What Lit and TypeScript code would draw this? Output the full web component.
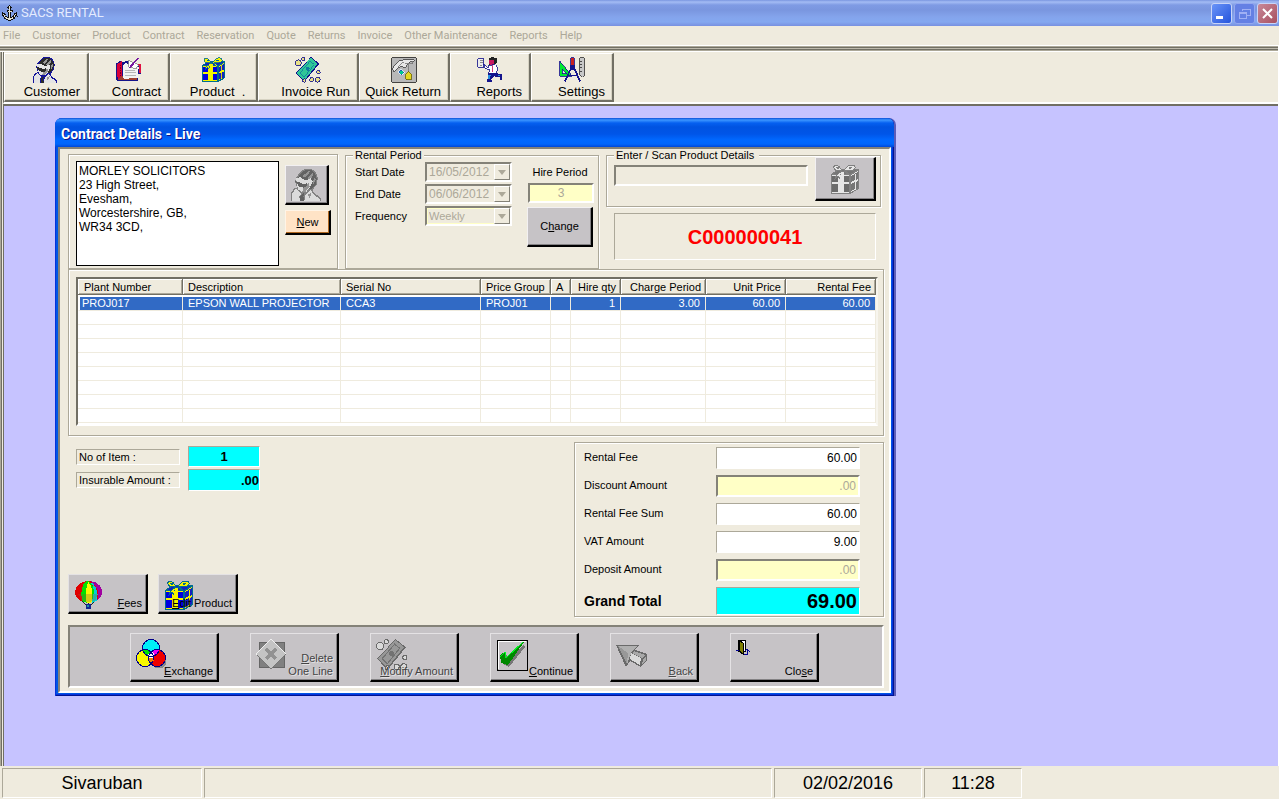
import { LitElement, html, css, svg, TemplateResult } from "lit";
import { customElement, property } from "lit/decorators.js";

const gift = (blue: string, yellow: string, line: string, shade: string) => svg`
  <path d="M1 10L9 5H29V25L20 30H1Z" fill=${line}/>
  <path d="M2 11H19V29H2Z" fill=${yellow}/>
  <path d="M21 11L28 7V24L21 28Z" fill=${yellow}/>
  <path d="M2 12H8V18H2ZM13 12H19V18H13ZM2 20H8V28H2ZM13 20H19V28H13Z" fill=${blue}/>
  <path d="M21 12L28 8V15L21 18ZM21 20L28 17V24L21 27Z" fill=${shade}/>
  <path d="M25 10V26" stroke=${yellow}/>
  <path d="M3 10L9 6H27L20 10Z" fill=${shade}/>
  <path d="M12 7C9 0 3 0 4 4C4 7 8 7 12 7C9 9 6 10 5 15L8 12L10 15C10 11 11 9 14 7C16 9 18 10 20 12C19 9 18 8 15 7C20 7 26 7 25 3C24 0 17 0 14 7Z" fill=${yellow} stroke=${line} stroke-width="1"/>
  <path d="M11 8H14V29H10V14Z" fill=${yellow}/>
  <path d="M6 3H9V5H7ZM18 4L20 3H22V4L19 5Z" fill=${line}/>`;

const person = (dark: string, mid: string, light: string, line: string) => svg`
  <path d="M4 12L5 8L9 3L13 0H20L24 3L26 9L25 15L21 20L22 23L29 28V31H0V23L3 19L6 18Z" fill=${line}/>
  <path d="M6 9L10 4L14 1H20L23 4L25 9L24 15L20 19L17 19L20 11L14 12L10 10L7 12Z" fill=${dark}/>
  <path d="M11 7L17 2L19 2L14 8ZM16 9L21 4L22 5L19 10ZM21 12L23 8L24 10L22 15Z" fill=${mid}/>
  <path d="M5 9L9 8L14 11L19 9L21 12L18 18L15 22H10L7 20L6 16Z" fill=${light}/>
  <path d="M12 17L17 14L18 17L14 22L11 22Z" fill=${mid}/>
  <path d="M4 12L9 13L13 15L16 13L15 17L12 18L8 17Z" fill=${dark}/>
  <path d="M1 31V24L3 21L5 19L7 21L10 24L8 27L9 31Z" fill=${light}/>
  <path d="M13 31L14 25L19 20L22 25L28 29V31Z" fill=${light}/>
  <path d="M9 26L13 23L12 27L13 31H9Z" fill=${dark}/>
  <path d="M16 25L20 23L18 28Z" fill=${mid}/>`;

const cash = (bg: string, mid: string, line: string, coin: string) => svg`
  <path d="M19 0L29 8L11 30L1 19Z" fill=${line}/>
  <path d="M19 1L27 8L11 28L2 19Z" fill=${bg}/>
  <path d="M18 5L23 9L11 24L6 19Z" fill="none" stroke=${mid}/>
  <circle cx="15" cy="14" r="2.500" fill=${mid}/>
  <g fill=${coin} stroke=${line}>
    <circle cx="4" cy="7" r="3.500"/><circle cx="10" cy="2.500" r="2"/>
    <circle cx="28" cy="18" r="2"/><circle cx="11" cy="28" r="2"/>
    <circle cx="20" cy="27" r="2.500"/><circle cx="27" cy="27" r="3"/>
  </g>`;

const ICONS: Record<string, TemplateResult> = {
  anchor: svg`
    <path d="M15 2L18 5L16 8V11H20V13H17V25L23 23L26 18L24 19L29 15L30 22L28 21L24 27L15 31L6 27L2 21L0 22L1 15L6 19H4L7 23L13 25V13H10V11H14V8L12 5Z" fill="#111" stroke="#111" stroke-width="2"/>
    <path d="M15 4L16 6L15 8L14 6ZM15 9V29M11 12H19M3 19L7 25L15 29L23 25L27 19" fill="none" stroke="#e8e4d4" stroke-width="2"/>`,
  person: person("#2a2a2a", "#969696", "#e4e4e4", "#14149a"),
  personOff: person("#626262", "#949494", "#dcdcdc", "#828282"),
  gift: gift("#0000e0", "#f4f400", "#006c90", "#1420c0"),
  giftOff: gift("#6c6c6c", "#e6e6e6", "#808080", "#767676"),
  cash: cash("#30c898", "#1078a0", "#10108c", "#e8e088"),
  cashOff: cash("#989898", "#727272", "#6a6a6a", "#dadada"),
  contract: svg`
    <path d="M0 8L6 4L8 6L16 4L18 10L28 8L30 20L26 20V29H2L0 26Z" fill="#14148c"/>
    <path d="M1 9L7 5V24L2 28Z" fill="#d80038"/>
    <path d="M2 27L8 22H25V28H3Z" fill="#a04030"/>
    <path d="M8 11L12 7L18 11L27 12L26 25L9 26Z" fill="#f2f2f2"/>
    <path d="M11 16H23M11 19H24M11 22H24" stroke="#aaa"/>
    <path d="M15 4L22 7L27 9L24 14L15 12Z" fill="#fff" stroke="#888"/>
    <path d="M16 13L24 4L27 1" stroke="#7818a0" stroke-width="2"/>
    <path d="M26 9H29V18H27" fill="none" stroke="#e01040" stroke-width="2"/>
    <path d="M5 9V24" stroke="#600018" stroke-dasharray="2 1"/>`,
  hand: svg`
    <path d="M1 1H30V30H1Z" fill="#b8b8b8" stroke="#222" stroke-width="1"/>
    <path d="M2 13L9 5L16 3L28 3V5L22 6L17 13L12 11L7 14L3 18Z" fill="#e8e8e8" stroke="#444" stroke-width="1"/>
    <path d="M8 12L15 6M17 8H26V5" fill="none" stroke="#777"/>
    <path d="M8 18L12 14L16 18L12 22Z" fill="#1860b0" stroke="#fff"/>
    <path d="M11 17H14V20H11Z" fill="#00c890"/>
    <path d="M21 7V18" stroke="#777"/>
    <path d="M18 20L21 17L25 21L24 27H18L17 24Z" fill="#e4d820" stroke="#6c6410" stroke-width="1"/>`,
  runner: svg`
    <path d="M1 2H8V12H1Z" fill="#ececec" stroke="#14148c" stroke-width="1"/>
    <path d="M3 4H7M3 7H7M3 10H6" stroke="#777"/>
    <path d="M14 2L18 0L24 2V7L20 9H14Z" fill="#222"/>
    <path d="M14 4H20V9H15Z" fill="#c81860"/>
    <path d="M8 8L13 13L14 10L22 9L25 14L22 20H14L15 15L10 14Z" fill="#fff" stroke="#14148c" stroke-width="1"/>
    <path d="M18 10V18" stroke="#c81860" stroke-width="1"/>
    <path d="M13 19H22L30 21V27H27V24L20 23L17 27L18 30H12V27L14 24Z" fill="#14148c"/>
    <path d="M13 21H17L14 28ZM23 21H27V23Z" fill="#2890e0"/>`,
  tools: svg`
    <path d="M1 5L16 23H1Z" fill="#00e830" stroke="#14148c" stroke-width="1"/>
    <path d="M4 14L9 20H4Z" fill="#efebde" stroke="#14148c" stroke-width="1"/>
    <path d="M16 10L7 29M17 10L25 29M11 22H23" stroke="#14148c" stroke-width="2"/>
    <path d="M14 1H18V10H14Z" fill="#c82020" stroke="#14148c" stroke-width="1"/>
    <path d="M13 10H19V15H13Z" fill="#14148c"/>
    <path d="M25 1H30V22L28 24L25 22Z" fill="#c8c8c8" stroke="#333" stroke-width="1"/>
    <path d="M25 5H28M25 9H27M25 13H28M25 17H27" stroke="#333"/>`,
  balloon: svg`
    <path d="M5 18L13 26M25 18L17 26M15 20V26" stroke="#222"/>
    <path d="M15 1C6 1 1 7 1 13C1 17 4 20 8 22L15 24L22 22C26 20 29 17 29 13C29 7 24 1 15 1Z" fill="#e00000"/>
    <path d="M13 1C8 5 7 9 8 22L15 24L20 22C23 12 20 4 15 1Z" fill="#00e000"/>
    <path d="M15 2C12 7 12 14 13 24H18C20 13 19 7 15 2Z" fill="#f8f800"/>
    <path d="M16 1C21 5 22 14 18 24L24 21C26 12 22 4 16 1Z" fill="#00d4d4"/>
    <path d="M17 1C26 2 29 8 29 13C29 17 27 19 24 21C27 12 24 6 17 1Z" fill="#a000a0"/>
    <path d="M4 14H25L22 21L15 23L8 21Z" fill="#806040" fill-opacity=".3"/>
    <path d="M12 25H18V30H13Z" fill="#102890"/><path d="M13 26H16V28H13Z" fill="#2090a0"/>`,
  circles: svg`
    <circle cx="23" cy="21" r="8.500" fill="#888"/>
    <circle cx="15" cy="9" r="8.500" fill="#00f0f8"/>
    <circle cx="9" cy="19" r="8.500" fill="#f8f800"/>
    <circle cx="21" cy="19" r="8.500" fill="#f00000"/>
    <path d="M7 11C11 10 15 12 17 14L14 17C11 17 8 15 7 11Z" fill="#00e000"/>
    <path d="M23 11C19 10 15 12 13 14L16 17C19 17 22 15 23 11Z" fill="#f000f0"/>
    <path d="M12 19H18C18 22 17 24 15 26C13 24 12 22 12 19Z" fill="#f08000"/>
    <path d="M12 15L15 12L18 15V19H12Z" fill="#fff"/>
    <g fill="none" stroke="#000088"><circle cx="15" cy="9" r="8.500"/><circle cx="9" cy="19" r="8.500"/><circle cx="21" cy="19" r="8.500"/></g>`,
  remove: svg`
    <path d="M3 3H28V28H3Z" fill="#808080" stroke="#666" stroke-width="1"/>
    <path d="M15 0L30 15L15 30L0 15Z" fill="#c4c4c4" stroke="#efefef" stroke-width="1"/>
    <path d="M30 15L15 30L1 16" fill="none" stroke="#777"/>
    <path d="M10 10L20 20M20 10L10 20" stroke="#929292" stroke-width="4"/>`,
  tick: svg`
    <path d="M1 1H31V31H1Z" fill="#c6c3c6" stroke="#000" stroke-width="1"/>
    <path d="M2 30V2H30" fill="none" stroke="#fff"/>
    <path d="M7 17L10 15L13 21L28 5L29 8L13 28L7 25Z" fill="#777"/>
    <path d="M4 16L9 13L11 19L26 3H28L12 26L5 24Z" fill="#008800"/>
    <path d="M4 18L9 13L10 19L27 3" fill="none" stroke="#00f020" stroke-width="1"/>`,
  back: svg`
    <path d="M0 6H23L19 11L31 15V21L25 28L14 22L10 28Z" fill="#6a6a6a"/>
    <path d="M2 7H21L16 12L11 25Z" fill="#b0b0b0"/>
    <path d="M2 7L12 14L11 25Z" fill="#989898"/>
    <path d="M15 14L25 19L24 26L14 20Z" fill="#dadada"/>
    <path d="M18 12L29 16L26 19L16 14ZM27 20L30 17V21L26 26Z" fill="#a8a8a8"/>`,
  door: svg`
    <path d="M2 1H9V12H2Z" fill="#fff" stroke="#000" stroke-width="1"/>
    <path d="M3 1L7 4V15L3 12Z" fill="#808000" stroke="#000" stroke-width="1"/>
    <path d="M0 11H3M8 15H11V11M9 12L11 10L14 13" fill="none" stroke="#000090" stroke-width="1"/>`,
};

const icon = (name: string, size: number, box = 30) => html`
  <svg class="icon" width=${size} height=${size} viewBox="0 0 ${box} ${box}" fill="none"
    shape-rendering="crispEdges" aria-hidden="true">${ICONS[name]}</svg>`;

/** Renders a caption with its access key underlined. */
const caption = (text: string, key = "") => {
  const i = key ? text.indexOf(key) : -1;
  return i < 0 ? text : html`${text.slice(0, i)}<u>${key}</u>${text.slice(i + 1)}`;
};

const shared = css`
  * { box-sizing: border-box; }
  button, input, select, textarea { font: inherit; color: inherit; margin: 0; border-radius: 0; }
  .icon { display: block; flex: none; }
`;

const COLUMNS = [
  { name: "Plant Number", width: "105px", right: false },
  { name: "Description", width: "auto", right: false },
  { name: "Serial No", width: "140px", right: false },
  { name: "Price Group", width: "70px", right: false },
  { name: "A", width: "20px", right: false },
  { name: "Hire qty", width: "50px", right: true },
  { name: "Charge Period", width: "85px", right: true },
  { name: "Unit Price", width: "80px", right: true },
  { name: "Rental Fee", width: "90px", right: true },
];

const LINES = [["PROJ017", "EPSON WALL PROJECTOR", "CCA3", "PROJ01", "", "1", "3.00", "60.00", "60.00"]];
const VISIBLE_ROWS = 9;

@customElement("contract-lines")
export class ContractLines extends LitElement {
  static styles = [shared, css`
    :host { display: block; height: 149px; overflow: hidden; background: #fff; border: 2px solid; border-color: #716f64 #f7f5ee #fff #716f64; }
    .grid { width: 100%; border-collapse: separate; border-spacing: 0; table-layout: fixed; font-size: 11px; line-height: 13px; }
    .head { height: 18px; padding: 0 5px; font-weight: 400; text-align: left; white-space: nowrap; background: #efebde; border-bottom: 2px solid #fff;
      box-shadow: inset -1px -1px #716f64, inset 1px 1px #fff, inset -2px -2px #aca899; }
    .head:first-child { padding-left: 6px; }
    .cell { height: 14px; padding: 0 5px; white-space: nowrap; border-right: 1px solid #efebde; border-bottom: 1px solid #efebde; }
    .picked .cell { background: #316ac5; color: #fff; }
    .picked .cell:first-child { padding-left: 2px; border-left: 2px solid #fff; }
    .head.right, .cell.right { text-align: right; }
  `];

  render() {
    const rows = Array.from({ length: VISIBLE_ROWS }, (_, i) => LINES[i] ?? COLUMNS.map(() => ""));
    return html`
      <table class="grid">
        <colgroup>${COLUMNS.map((c) => html`<col style="width:${c.width}">`)}</colgroup>
        <thead><tr>${COLUMNS.map((c) => html`<th scope="col" class="head ${c.right ? "right" : ""}">${c.name}</th>`)}</tr></thead>
        <tbody>${rows.map((row, i) => html`
          <tr class=${i === 0 ? "picked" : ""}>
            ${row.map((v, j) => html`<td class="cell ${COLUMNS[j].right ? "right" : ""}">${v}</td>`)}
          </tr>`)}</tbody>
      </table>`;
  }
}

@customElement("picture-button")
export class PictureButton extends LitElement {
  @property() icon = "";
  @property() label = "";
  @property() key = "";
  @property({ type: Number }) size = 30;
  @property({ type: Number }) box = 30;
  @property({ type: Boolean }) disabled = false;

  static styles = [shared, css`
    :host { display: grid; grid-template-rows: minmax(0, 1fr); }
    .face { display: grid; grid-template-rows: minmax(0, 1fr); width: 100%; height: 100%; padding: 4px 4px 2px; background: #c6c3c6; color: #000;
      border: 1px solid; border-color: #e4e2e4 #000 #000 #e4e2e4; border-width: 1px 2px 2px 1px; box-shadow: inset -1px -1px #848284; }
    .icon, .label { grid-area: 1 / 1; }
    .icon { place-self: start; margin: 1px; }
    .label { place-self: end; text-align: right; white-space: pre; font-size: 11px; line-height: 13px; z-index: 1; }
    .line { display: block; }
    .face:disabled .label { color: #444; text-shadow: 1px 1px #e4e2e4; }
  `];

  render() {
    return html`<button class="face" ?disabled=${this.disabled}>
      ${icon(this.icon, this.size, this.box)}
      <span class="label">${this.label.split("\n").map((part, i) => html`<span class="line">${caption(part, i ? "" : this.key)}</span>`)}</span>
    </button>`;
  }
}

const TOTALS = [
  { id: "fee", name: "Rental Fee", value: "60.00", kind: "" },
  { id: "discount", name: "Discount Amount", value: ".00", kind: "locked" },
  { id: "sum", name: "Rental Fee Sum", value: "60.00", kind: "" },
  { id: "vat", name: "VAT Amount", value: "9.00", kind: "" },
  { id: "deposit", name: "Deposit Amount", value: ".00", kind: "locked" },
  { id: "grand", name: "Grand Total", value: "69.00", kind: "grand" },
];

const ACTIONS = [
  { label: "Exchange", key: "E", icon: "circles", size: 30, box: 30, off: false },
  { label: "Delete\nOne Line", key: "D", icon: "remove", size: 31, box: 31, off: true },
  { label: "Modify Amount", key: "M", icon: "cashOff", size: 32, box: 31, off: true },
  { label: "Continue", key: "C", icon: "tick", size: 32, box: 32, off: false },
  { label: "Back", key: "B", icon: "back", size: 32, box: 32, off: true },
  { label: "Close", key: "s", icon: "door", size: 16, box: 16, off: false },
];

@customElement("contract-dialog")
export class ContractDialog extends LitElement {
  static styles = [shared, css`
    :host { display: flex; flex-direction: column; padding: 0 3px 3px; border-radius: 7px 7px 0 0; background: #0055e5;
      box-shadow: inset 1px 0 #0831d9, inset -1px -1px #001590, inset -2px -2px #0831d9, 2px 0 #5c5cb8; }
    .title { height: 29px; margin: 0 -3px; padding: 3px 6px 0; border-radius: 7px 7px 0 0; display: flex; align-items: center; color: #fff;
      font: 700 14px/16px Roboto, sans-serif; text-shadow: 1px 1px #0f1089;
      background: linear-gradient(#0a4fd8 0, #3c96ff 2px, #0560f0 5px, #0053e1 9px, #0055e8 16px, #0068ff 22px, #0066fc 26px, #0048d8 29px); }
    .body { display: flex; flex-direction: column; padding: 0 5px 3px 8px; background: #efebde; border: 2px solid; border-color: #848278 #fff #fff #848278; }
    .etched { border: 1px solid #aca899; box-shadow: 1px 1px #fff, inset 1px 1px #fff; margin: 0; padding: 0; min-width: 0; }
    .top { display: flex; gap: 7px; height: 120px; }
    .customer { flex: 1 1 270px; display: flex; gap: 6px; margin-top: 5px; padding: 6px 6px 2px 7px; }
    .address { flex: 1; resize: none; overflow: hidden; padding: 2px; border: 1px solid #000; background: #fff; font-size: 12px; line-height: 14px; }
    .side { display: flex; flex-direction: column; gap: 5px; width: 46px; padding-top: 4px; }
    .push { display: grid; place-items: center; padding: 0; background: #c6c3c6; border: 1px solid; border-color: #f2f0f2 #000 #000 #f2f0f2; border-width: 1px 2px 2px 1px; box-shadow: inset -1px -1px #848284; }
    .who { width: 44px; height: 40px; }
    .new { height: 25px; background: #ffe3c6; border-color: #fff4e6 #000 #000 #fff4e6; box-shadow: inset -1px -1px #b06820; }
    .legend { padding: 0 2px; margin-left: 7px; line-height: 12px; background: #efebde; }
    .period { flex: none; width: 254px; }
    .period-body { display: flex; justify-content: space-between; padding: 1px 5px 0 9px; }
    .dates { display: grid; grid-template-columns: 70px 87px; grid-auto-rows: 20px; gap: 2px 0; }
    .dates label { line-height: 20px; }
    .combo { display: grid; }
    .combo > * { grid-area: 1 / 1; }
    .pick { appearance: none; width: 100%; height: 20px; padding: 0 20px 0 2px; background: #efebde; color: #aca899; opacity: 1; border: 2px solid; border-color: #848278 #fff #fff #848278; font-size: 12px; line-height: 16px; }
    .word { font-size: 11px; box-shadow: inset 1px 1px #ffffc6, inset 0 -1px #ffffc6; }
    .drop { place-self: center end; margin-right: 2px; width: 16px; height: 16px; display: grid; place-items: center; background: #efebde; border: 1px solid; border-color: #fff #848278 #848278 #fff; pointer-events: none; }
    .hire { display: flex; flex-direction: column; width: 66px; }
    .hire label { text-align: center; line-height: 21px; white-space: nowrap; }
    .units { height: 20px; margin: 0 1px 4px; text-align: center; font-size: 12px; }
    .change { height: 40px; }
    .field { min-width: 0; width: 100%; border: 1px solid; border-color: #aca899 #fff #fff #aca899; background: #fff; padding: 0 2px; color: #000; }
    .locked { border-width: 2px; border-color: #848278 #fff #fff #848278; background: #ffffc6; color: #aca899; }
    .cyan { background: #0ff; font-weight: 700; font-size: 13px; }
    .scan-side { flex: none; width: 275px; margin-right: 3px; display: flex; flex-direction: column; gap: 6px; }
    .scan { height: 58px; }
    .wide { padding-right: 5px; }
    .scan-row { display: flex; gap: 7px; margin: -4px 4px 0 7px; }
    .scan-box { flex: 1; height: 21px; margin-top: 8px; background: #efebde; }
    .scan-go { width: 61px; height: 44px; }
    .number { margin: 0 5px 0 8px; height: 47px; padding-top: 2px; display: grid; place-items: center; border: 1px solid; border-color: #aca899 #fff #fff #aca899; color: #f00; font-weight: 700; font-size: 20px; }
    .lines { padding: 7px 5px 9px 7px; }
    .middle { display: flex; justify-content: space-between; margin-top: 6px; }
    .left { display: flex; flex-direction: column; justify-content: space-between; padding: 4px 0 3px; }
    .counts { display: grid; grid-template-columns: 104px 72px; gap: 2px 8px; margin-left: 8px; align-items: center; }
    .tag { border: 1px solid; border-color: #aca899 #fff #fff #aca899; padding: 0 2px; line-height: 14px; }
    .count { height: 21px; text-align: center; }
    .sum { height: 22px; text-align: right; padding-right: 0; }
    .pair { display: grid; grid-template-columns: 80px 80px; grid-auto-rows: 40px; gap: 10px; }
    .totals { width: 310px; padding: 4px 23px 1px 9px; display: grid; grid-template-columns: 132px 1fr; gap: 6px 0; }
    .totals label { line-height: 20px; }
    .totals .amount { height: 22px; text-align: right; font-size: 12px; }
    .totals label.strong { font-size: 14px; font-weight: 700; line-height: 28px; }
    .totals .grand { height: 28px; background: #0ff; font-size: 20px; font-weight: 700; }
    .actions { display: grid; grid-template-columns: repeat(6, 89px); grid-auto-rows: 49px; gap: 31px; margin-top: 8px; padding: 6px 60px 4px; background: #c6c3c6; border: 2px solid; border-color: #848278 #fff #fff #848278; }
  `];

  private combo(id: string, value: string, word = false) {
    return html`<div class="combo">
      <select id=${id} class="pick ${word ? "word" : ""}" disabled><option>${value}</option></select>
      <span class="drop"><svg class="icon" width="8" height="5" viewBox="0 0 8 5" aria-hidden="true"><path d="M0 0H8L4 5Z" fill="#aca899"/></svg></span>
    </div>`;
  }

  render() {
    return html`
      <header class="title">Contract Details - Live</header>
      <div class="body">
        <div class="top">
          <section class="customer etched">
            <textarea class="address" aria-label="Customer address" readonly .value=${"MORLEY SOLICITORS\n23 High Street,\nEvesham,\nWorcestershire, GB,\nWR34 3CD,"}></textarea>
            <div class="side">
              <button class="push who" aria-label="Customer" disabled>${icon("personOff", 32, 31)}</button>
              <button class="push new"><span>${caption("New", "N")}</span></button>
            </div>
          </section>

          <fieldset class="period etched">
            <legend class="legend">Rental Period</legend>
            <div class="period-body">
              <div class="dates">
                <label for="start">Start Date</label>${this.combo("start", "16/05/2012")}
                <label for="end">End Date</label>${this.combo("end", "06/06/2012")}
                <label for="every">Frequency</label>${this.combo("every", "Weekly", true)}
              </div>
              <div class="hire">
                <label for="units">Hire Period</label>
                <input id="units" class="field locked units" value="3" size="3" disabled>
                <button class="push change"><span>${caption("Change", "h")}</span></button>
              </div>
            </div>
          </fieldset>

          <div class="scan-side">
            <fieldset class="scan etched">
              <legend class="legend wide">Enter / Scan Product Details</legend>
              <div class="scan-row">
                <input class="field locked scan-box" aria-label="Enter / Scan Product Details" disabled>
                <button class="push scan-go" aria-label="Find product" disabled>${icon("giftOff", 30)}</button>
              </div>
            </fieldset>
            <output class="number">C000000041</output>
          </div>
        </div>

        <section class="lines etched"><contract-lines></contract-lines></section>

        <div class="middle">
          <div class="left">
            <div class="counts">
              <label class="tag" for="items">No of Item :</label>
              <input id="items" class="field cyan count" value="1" readonly>
              <label class="tag" for="insured">Insurable Amount :</label>
              <input id="insured" class="field cyan sum" value=".00" readonly>
            </div>
            <div class="pair">
              <picture-button icon="balloon" label="Fees" key="F" .size=${29}></picture-button>
              <picture-button icon="gift" label="Edit Product" key="E"></picture-button>
            </div>
          </div>
          <section class="totals etched">
            ${TOTALS.map((t) => html`
              <label for=${t.id} class=${t.kind === "grand" ? "strong" : ""}>${t.name}</label>
              <input id=${t.id} class="field amount ${t.kind}" value=${t.value} readonly ?disabled=${t.kind === "locked"}>`)}
          </section>
        </div>

        <div class="actions">
          ${ACTIONS.map((a) => html`<picture-button .icon=${a.icon} .label=${a.label} .key=${a.key} .size=${a.size} .box=${a.box} ?disabled=${a.off}></picture-button>`)}
        </div>
      </div>`;
  }
}

const MENU = ["File", "Customer", "Product", "Contract", "Reservation", "Quote", "Returns", "Invoice", "Other Maintenance", "Reports", "Help"];

const TOOLS = [
  { label: "Customer", icon: "person", width: 85 },
  { label: "Contract", icon: "contract", width: 81 },
  { label: "Product\u00a0 .\u00a0", icon: "gift", width: 88 },
  { label: "Invoice Run", icon: "cash", width: 101 },
  { label: "Quick Return", icon: "hand", width: 91 },
  { label: "Reports", icon: "runner", width: 81 },
  { label: "Settings", icon: "tools", width: 83 },
];

@customElement("app-root")
export class AppRoot extends LitElement {
  static styles = [shared, css`
    :host { display: flex; flex-direction: column; min-height: 100vh; background: #efebde; color: #000; font: 11px/13px "Liberation Sans", Arial, sans-serif; }
    .titlebar { display: flex; align-items: center; height: 26px; padding: 0 1px 0 2px; color: #e4ecff; font: 400 13px/16px Roboto, sans-serif;
      background: linear-gradient(#7a96e0 0, #a4bcf4 2px, #7f9be4 5px, #7a96df 10px, #84a4ec 17px, #84a8f0 22px, #7890e0 26px); }
    .name { flex: 1; margin-left: 3px; }
    .controls { display: flex; gap: 2px; }
    .control { width: 21px; height: 21px; padding: 0; display: grid; place-items: center; border: 1px solid #c8d4f8; border-radius: 3px; }
    .min { background: linear-gradient(135deg, #6a94f8, #2454dc); }
    .max { background: #6480e4; border-color: #94a8f0; }
    .shut { background: linear-gradient(135deg, #c88898, #a85060); }
    .menu { display: flex; gap: 12px; height: 19px; padding: 0 3px; }
    .item { padding: 0; border: 0; background: none; color: #aca899; font: 11px/18px Roboto, sans-serif; white-space: nowrap; }
    .frame { flex: 1; display: flex; flex-direction: column; border-right: 1px solid #fff; border-left: 1px solid #aca899; }
    .rule { height: 7px; margin-left: -1px; background: linear-gradient(#fff 1px, #aca899 1px 2px, #716f64 2px 3px, #bdb9ab 3px 4px, #716f64 4px 5px, #aca899 5px 6px, #fff 6px); }
    .inner { flex: 1; display: flex; flex-direction: column; border-left: 1px solid #716f64; padding-left: 1px; }
    .tools { display: flex; padding: 1px 0 0; height: 52px; border-left: 1px solid #716f64; border-bottom: 2px solid #fff; }
    .tool { display: flex; flex-direction: column; align-items: center; gap: 1px; padding: 3px 7px 0 0; background: #efebde; border: 1px solid; border-color: #fff #716f64 #716f64 #fff; border-width: 1px 2px 2px 1px; font-size: 13px; line-height: 16px; box-shadow: inset -1px -1px #d6d2c2; }
    .tool .icon { margin-right: -7px; }
    .text { align-self: flex-end; white-space: nowrap; }
    .desk { flex: 1; padding: 12px 16px 16px 51px; background: #c6c3ff; border-top: 2px solid #716f64; border-left: 1px solid #716f64; }
    .window { width: 839px; max-width: 100%; }
    .status { display: flex; gap: 2px; height: 33px; padding: 2px 0 1px 2px; font-size: 18px; line-height: 28px; text-align: center; }
    .panel { border: 1px solid; border-color: #aca899 #fff #fff #aca899; }
    .user { width: 200px; }
    .blank { flex: 1; }
    .date { width: 148px; }
    .time { width: 98px; }
    .rest { width: 255px; border-color: transparent; }
  `];

  render() {
    return html`
      <header class="titlebar">
        ${icon("anchor", 16, 32)}<span class="name">SACS RENTAL</span>
        <div class="controls">
          <button class="control min" aria-label="Minimize"><svg width="13" height="13" viewBox="0 0 13 13"><path d="M1 9H8V12H1Z" fill="#fff"/></svg></button>
          <button class="control max" aria-label="Restore" disabled><svg width="13" height="13" viewBox="0 0 13 13" fill="none" stroke="#a0b0f4" stroke-width="1" shape-rendering="crispEdges"><path d="M4 4V2H12V8H9M1 5H8V11H1ZM1 6H8"/></svg></button>
          <button class="control shut" aria-label="Close"><svg width="13" height="13" viewBox="0 0 13 13"><path d="M2 2L11 11M11 2L2 11" stroke="#fff" stroke-width="2"/></svg></button>
        </div>
      </header>
      <nav class="menu">${MENU.map((m) => html`<button class="item" disabled>${m}</button>`)}</nav>
      <div class="frame">
        <div class="rule"></div>
        <div class="inner">
          <div class="tools">
            ${TOOLS.map((t) => html`<button class="tool" style="width:${t.width}px">${icon(t.icon, 26, 31)}<span class="text">${t.label}</span></button>`)}
          </div>
          <main class="desk"><contract-dialog class="window"></contract-dialog></main>
        </div>
      </div>
      <footer class="status">
        <div class="panel user">Sivaruban</div>
        <div class="panel blank"></div>
        <div class="panel date">02/02/2016</div>
        <div class="panel time">11:28</div>
        <div class="panel rest"></div>
      </footer>`;
  }
}
